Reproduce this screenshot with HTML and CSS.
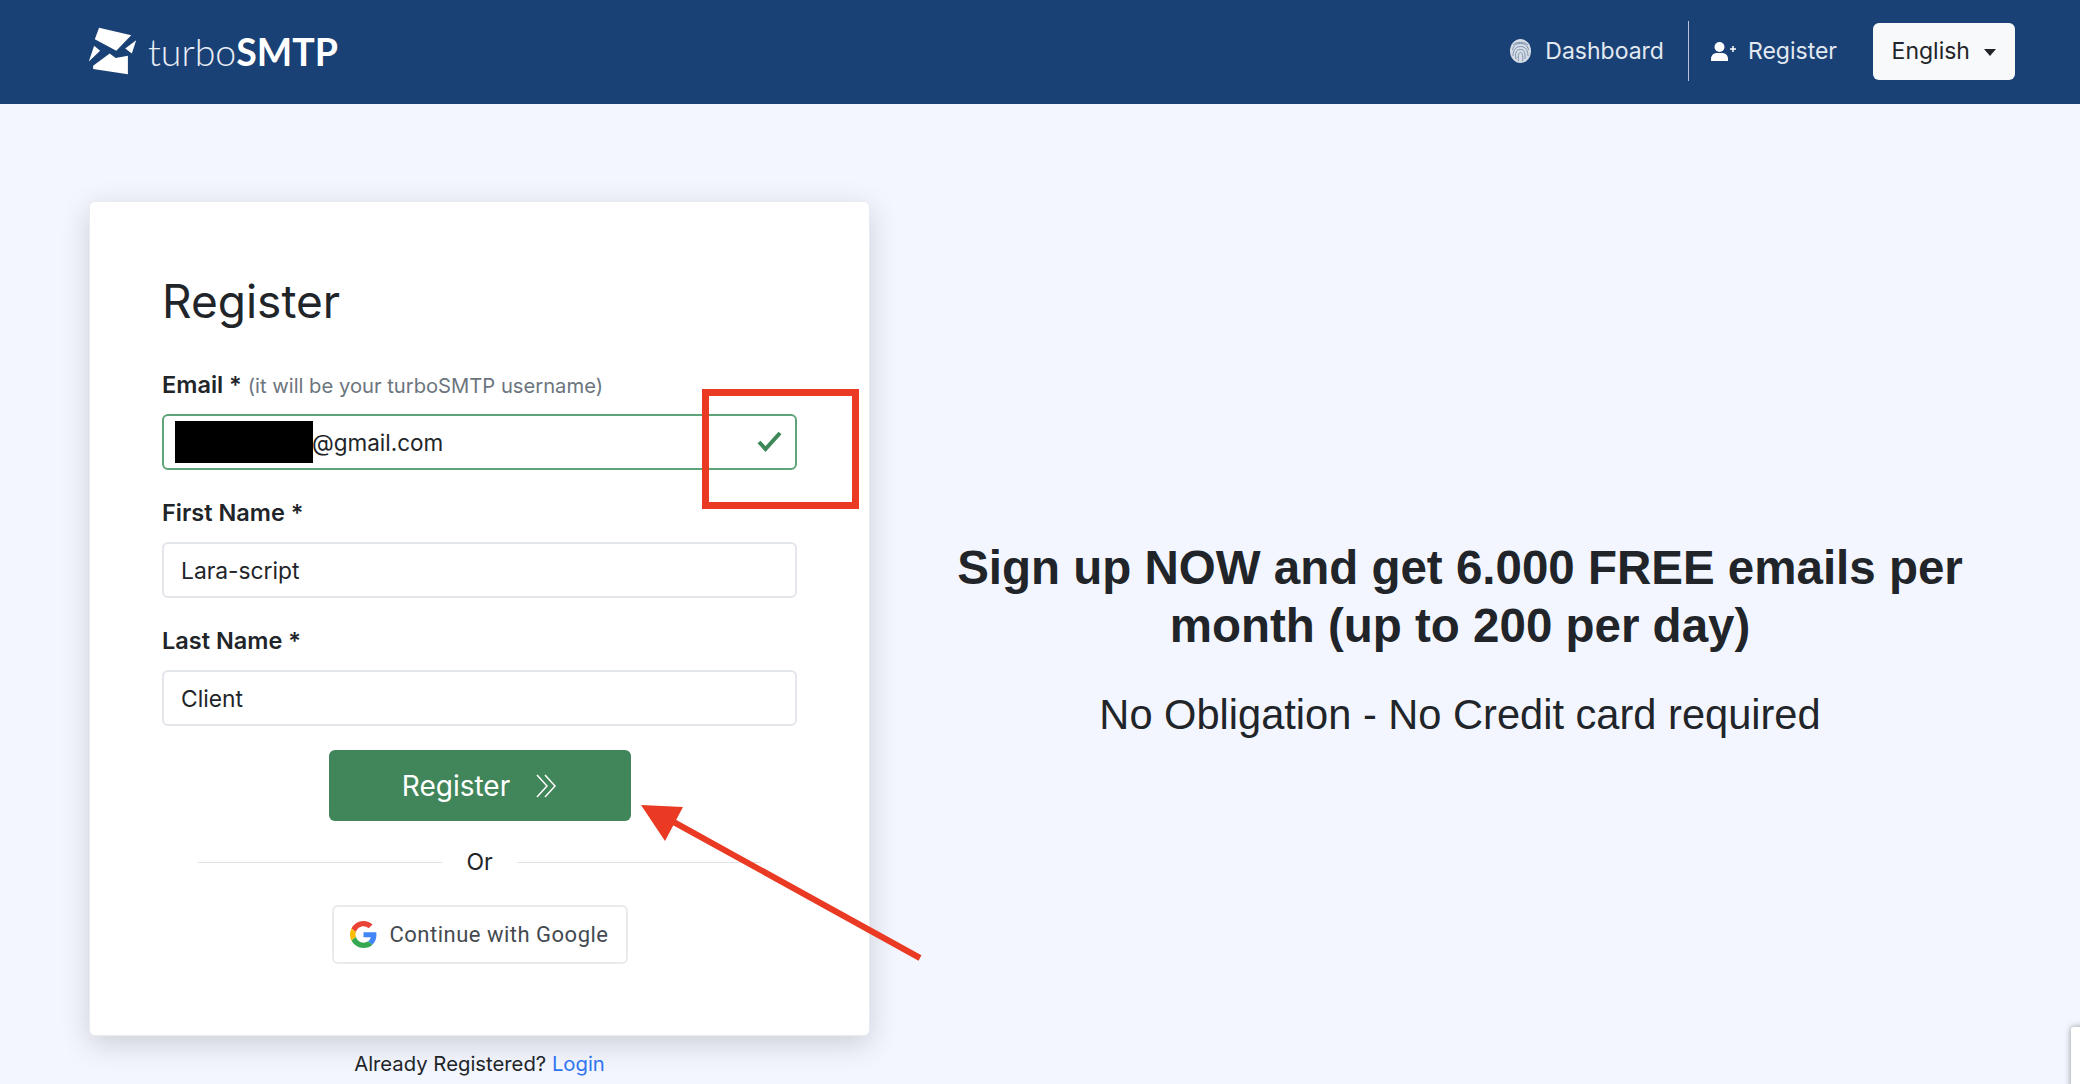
FILE: index.html
```html
<!DOCTYPE html>
<html lang="en">
<head>
    <meta charset="UTF-8">
    <title>turboSMTP - Register</title>
    <link rel="stylesheet" href="styles.css">
</head>
<body>
    <header class="topbar">
        <a class="logo" href="#">
            <svg class="logo-mark" viewBox="85 78 147 145">
                <polygon points="118,80 215,103 170,150 105,115" fill="#fff"/>
                <polygon points="100,195 150,158 168,172 205,165 205,221 100,205" fill="#fff"/>
                <polygon points="87,182 103,135 121,150" fill="#fff"/>
                <polygon points="230,118 217,158 197,143" fill="#fff"/>
            </svg>
            <span class="logo-text">turbo<b>SMTP</b></span>
        </a>
        <nav class="topnav">
            <a class="nav-link nav-dash" href="#">
                <svg class="nav-icon" width="21" height="24" viewBox="0 0 21 24">
                    <ellipse cx="10.500" cy="12" rx="10.500" ry="12" fill="#d5dce6"/>
                    <path d="M3 6c3-3.500 12-3.500 15 0M2.500 11c1-5 4-6.500 8-6.500s7 1.500 8 6.500M3 17c0-5 2-9.500 7.500-9.500S18 12 18 17M6 20c-1-5-.5-9.500 4.500-9.500S15 15 15 20M8.500 22c-.5-3-.5-8.500 2-8.500s2.500 5.500 2 8.500" fill="none" stroke="#7f93ad" stroke-width="1"/>
                </svg>
                Dashboard
            </a>
            <a class="nav-link nav-reg" href="#">
                <svg class="nav-icon" width="25" height="19" viewBox="0 0 25 19">
                    <circle cx="8.500" cy="5" r="5" fill="#fff"/>
                    <path d="M0 19v-2c0-4 3-6 6-6h5c3 0 6 2 6 6v2z" fill="#fff"/>
                    <path d="M22 4v6M19 7h6" stroke="#fff" stroke-width="1.500"/>
                </svg>
                Register
            </a>
            <button class="lang-btn">English <span class="caret"></span></button>
        </nav>
    </header>

    <main class="page">
        <div class="left-col">
            <section class="card">
                <h1>Register</h1>
                <div class="form-group">
                    <label>Email * <small>(it will be your turboSMTP username)</small></label>
                    <div class="field">
                        <input class="valid" type="text" value="@gmail.com">
                        <span class="redacted"></span>
                        <svg class="tick" width="25" height="21" viewBox="0 0 25 21">
                            <path d="M2 11l6.500 7L23 2" fill="none" stroke="#3d8758" stroke-width="4"/>
                        </svg>
                        <span class="red-box"></span>
                    </div>
                </div>
                <div class="form-group">
                    <label>First Name *</label>
                    <input type="text" value="Lara-script">
                </div>
                <div class="form-group">
                    <label>Last Name *</label>
                    <input type="text" value="Client">
                </div>
                <button class="btn-register">
                    Register
                    <svg width="22" height="24" viewBox="0 0 22 24">
                        <path d="M2 1l10 11L2 23M10 1l10 11-10 11" fill="none" stroke="#fff" stroke-width="1.500"/>
                    </svg>
                </button>
                <div class="divider"><span>Or</span></div>
                <button class="btn-google">
                    <svg width="27" height="27" viewBox="0 0 48 48">
                        <path fill="#ea4335" d="M24 9.500c3.500 0 6.700 1.200 9.200 3.600l6.900-6.900C35.900 2.400 30.500 0 24 0 14.600 0 6.500 5.400 2.600 13.200l8 6.200C12.500 13.700 17.800 9.500 24 9.500z"/>
                        <path fill="#4285f4" d="M47 24.500c0-1.600-.1-3.100-.4-4.500H24v9h12.900c-.6 3-2.300 5.500-4.800 7.200l7.700 6C44.300 38 47 31.800 47 24.500z"/>
                        <path fill="#fbbc05" d="M10.500 28.600c-.5-1.400-.8-3-.8-4.600s.3-3.200.8-4.600l-8-6.200C.9 16.500 0 20.100 0 24s.9 7.500 2.600 10.800z"/>
                        <path fill="#34a853" d="M24 48c6.500 0 11.900-2.100 15.900-5.800l-7.700-6c-2.200 1.400-4.900 2.300-8.100 2.300-6.300 0-11.600-4.200-13.500-9.900l-8 6.200C6.500 42.600 14.600 48 24 48z"/>
                    </svg>
                    Continue with Google
                </button>
            </section>
            <p class="already">Already Registered? <a href="#">Login</a></p>
        </div>

        <aside class="promo">
            <h2>Sign up NOW and get 6.000 FREE emails per month (up to 200 per day)</h2>
            <p>No Obligation - No Credit card required</p>
        </aside>
    </main>

    <!-- annotation on top of the screenshot -->
    <svg class="arrow" width="300" height="170" viewBox="0 0 300 170">
        <polygon points="1,5 43,7 25,41" fill="#ea3a23"/>
        <line x1="30" y1="20" x2="280" y2="158" stroke="#ea3a23" stroke-width="6"/>
    </svg>
    <div class="corner-badge"></div>
</body>
</html>
```

FILE: styles.css
```css
* {
    box-sizing: border-box;
}
html, body {
    height: 100%;
}
body {
    margin: 0;
    position: relative;
    overflow: hidden;
    background-color: #f3f6fe;
    color: #212529;
    font-family: Inter, "Liberation Sans", sans-serif;
}
a {
    text-decoration: none;
}

.topbar {
    height: 104px;
    padding: 0 65px 2px 88px;
    display: flex;
    align-items: center;
    justify-content: space-between;
    background-color: #1a4175;
}
.logo {
    display: flex;
    align-items: center;
    gap: 11px;
}
.logo-mark {
    width: 49px;
    height: 48px;
}
.logo-text {
    color: #e9eef5;
    font-family: Lato, sans-serif;
    font-size: 37.500px;
    font-weight: 300;
}
.logo-text b {
    color: #fff;
    font-weight: 700;
}
.topnav {
    display: flex;
    align-items: center;
}
.nav-link {
    display: flex;
    align-items: center;
    gap: 14px;
    height: 60px;
    color: #e3e9f1;
    font-size: 23px;
}
.nav-dash {
    padding-right: 24px;
    border-right: 1px solid #b9c5d6;
}
.nav-reg {
    padding-left: 22px;
    gap: 12px;
}
.lang-btn {
    margin-left: 36px;
    width: 142px;
    height: 57px;
    border: none;
    border-radius: 6px;
    background-color: #f8f9fa;
    color: #212529;
    font-family: inherit;
    font-size: 23px;
}
.caret {
    display: inline-block;
    margin-left: 8px;
    vertical-align: middle;
    border-top: 7px solid #212529;
    border-left: 6px solid transparent;
    border-right: 6px solid transparent;
}

.page {
    display: flex;
    padding: 97px 90px 0 89px;
}
.left-col {
    width: 781px;
    flex-shrink: 0;
}
.card {
    height: 835px;
    padding: 73px 72px 0;
    border: 1px solid #e8ebf1;
    border-radius: 6px;
    background-color: #fff;
    box-shadow: 0 8px 30px rgba(0, 0, 0, 0.16);
}
.card h1 {
    margin: 0 0 42px;
    font-size: 46px;
    font-weight: 400;
    line-height: 53px;
}
.form-group {
    margin-bottom: 28px;
}
.form-group label {
    display: block;
    height: 30px;
    margin-bottom: 14px;
    font-size: 23.500px;
    font-weight: 600;
    line-height: 30px;
}
.form-group small {
    color: #6c757d;
    font-size: 20.200px;
    font-weight: 400;
}
.field {
    position: relative;
}
.form-group input {
    display: block;
    width: 100%;
    height: 56px;
    padding: 0 17px;
    border: 2px solid #e3e6eb;
    border-radius: 6px;
    color: #212529;
    font-family: inherit;
    font-size: 22.800px;
}
.form-group input.valid {
    padding-left: 148px;
    border-color: #5da47a;
    font-size: 22.500px;
}
.redacted {
    position: absolute;
    left: 13px;
    top: 7px;
    width: 138px;
    height: 42px;
    background-color: #000;
}
.tick {
    position: absolute;
    left: 595px;
    top: 17px;
}
.red-box {
    position: absolute;
    left: 540px;
    top: -25px;
    width: 157px;
    height: 120px;
    border: 7px solid #ea3a23;
}

.btn-register {
    display: flex;
    align-items: center;
    justify-content: center;
    gap: 25px;
    width: 302px;
    height: 71px;
    margin: -4px auto 26px;
    border: none;
    border-radius: 6px;
    background-color: #40865a;
    color: #fff;
    font-family: inherit;
    font-size: 28px;
}
.divider {
    display: flex;
    align-items: center;
    gap: 24px;
    height: 30px;
    margin: 0 36px 28px;
    font-size: 23px;
}
.divider:before, .divider:after {
    content: "";
    flex: 1;
    border-top: 1px solid #dfe3e8;
}
.btn-google {
    display: flex;
    align-items: center;
    justify-content: center;
    gap: 12px;
    width: 296px;
    height: 59px;
    margin: 0 auto;
    border: 2px solid #e8eaee;
    border-radius: 6px;
    background-color: #fff;
    color: #444a50;
    font-family: Roboto, sans-serif;
    font-size: 22px;
    font-weight: 400;
    letter-spacing: 0.500px;
}
.already {
    margin: 16px 0 0;
    font-size: 20.300px;
    line-height: 24px;
    text-align: center;
}
.already a {
    color: #2f74f0;
}

.promo {
    flex: 1;
    padding: 338px 0 0 60px;
    text-align: center;
    font-family: "Liberation Sans", Arial, sans-serif;
}
.promo h2 {
    margin: 0 0 33px;
    font-size: 47.500px;
    font-weight: 700;
    line-height: 58px;
}
.promo p {
    margin: 0;
    font-size: 41.600px;
    line-height: 54px;
}

.arrow {
    position: absolute;
    left: 640px;
    top: 800px;
}
.corner-badge {
    position: absolute;
    left: 2071px;
    top: 1027px;
    width: 60px;
    height: 80px;
    border-radius: 3px;
    background-color: #fff;
    box-shadow: 0 0 6px rgba(0, 0, 0, 0.4);
}
```
